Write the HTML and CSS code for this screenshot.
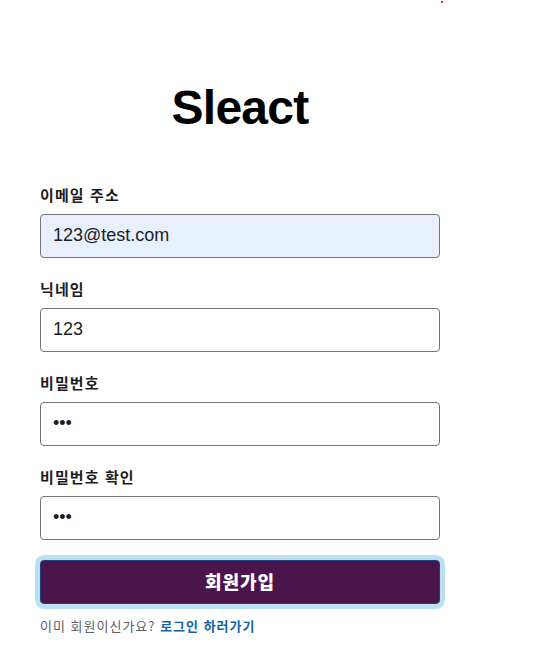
FILE: index.html
```html
<!DOCTYPE html>
<html lang="ko">
<head>
<meta charset="utf-8">
<title>Sleact</title>
<link rel="stylesheet" href="styles.css">
</head>
<body>
<span class="dot"></span>
<div class="page">
  <header class="header">Sleact</header>
  <form class="form">
    <label class="field">
      <span class="label-text">이메일 주소</span>
      <input class="input input-autofill" type="email" value="123@test.com">
    </label>
    <label class="field">
      <span class="label-text">닉네임</span>
      <input class="input" type="text" value="123">
    </label>
    <label class="field">
      <span class="label-text">비밀번호</span>
      <input class="input" type="password" value="123">
    </label>
    <label class="field">
      <span class="label-text">비밀번호 확인</span>
      <input class="input" type="password" value="123">
    </label>
    <button class="button" type="button">회원가입</button>
  </form>
  <div class="link-container">이미 회원이신가요?&nbsp;<a class="link" href="#">로그인 하러가기</a></div>
</div>
</body>
</html>
```

FILE: styles.css
```css
html, body {
  margin: 0;
  padding: 0;
  background: #fff;
}
body {
  font-family: "Liberation Sans", "Noto Sans CJK KR", sans-serif;
  position: relative;
}
.dot {
  position: absolute;
  left: 441px;
  top: 1px;
  width: 2px;
  height: 2px;
  background: #f0203a;
}
.page {
  width: 400px;
  margin-left: 40px;
  padding-top: 85px;
}
.header {
  font-family: "Liberation Sans", sans-serif;
  font-weight: 700;
  font-size: 48px;
  line-height: 46px;
  letter-spacing: -0.75px;
  text-align: center;
  color: #000;
  margin-bottom: 53px;
}
.form {
  display: flex;
  flex-direction: column;
}
.field {
  display: block;
}
.label-text {
  display: block;
  font-family: "Noto Sans CJK KR", "Liberation Sans", sans-serif;
  font-size: 15px;
  font-weight: 700;
  line-height: 22px;
  letter-spacing: 1.1px;
  padding-bottom: 8px;
  color: #1d1c1d;
}
.input {
  display: block;
  box-sizing: border-box;
  width: 100%;
  height: 44px;
  margin: 0 0 20px;
  padding: 11px 12px 13px;
  border: 1px solid #767676;
  border-radius: 4px;
  font-family: "Liberation Sans", sans-serif;
  font-size: 18px;
  line-height: 24px;
  color: #1d1c1d;
  background: #fff;
  outline: none;
}
.input-autofill {
  background: #e8f0fe;
}
.button {
  box-sizing: border-box;
  width: 100%;
  height: 44px;
  margin: 0 0 12px;
  padding: 0 16px 3px;
  border: 1px solid #1f3f80;
  border-radius: 4px;
  background: #4a154b;
  color: #fff;
  font-family: "Noto Sans CJK KR", sans-serif;
  font-size: 18px;
  font-weight: 900;
  letter-spacing: 1px;
  box-shadow: 0 0 0 5px rgba(29, 155, 209, 0.3);
  cursor: pointer;
}
.link-container {
  font-family: "Noto Sans CJK KR", sans-serif;
  font-size: 13px;
  line-height: 20px;
  letter-spacing: 1px;
  color: #616061;
}
.link {
  color: #1264a3;
  font-weight: 700;
  text-decoration: none;
}
```
